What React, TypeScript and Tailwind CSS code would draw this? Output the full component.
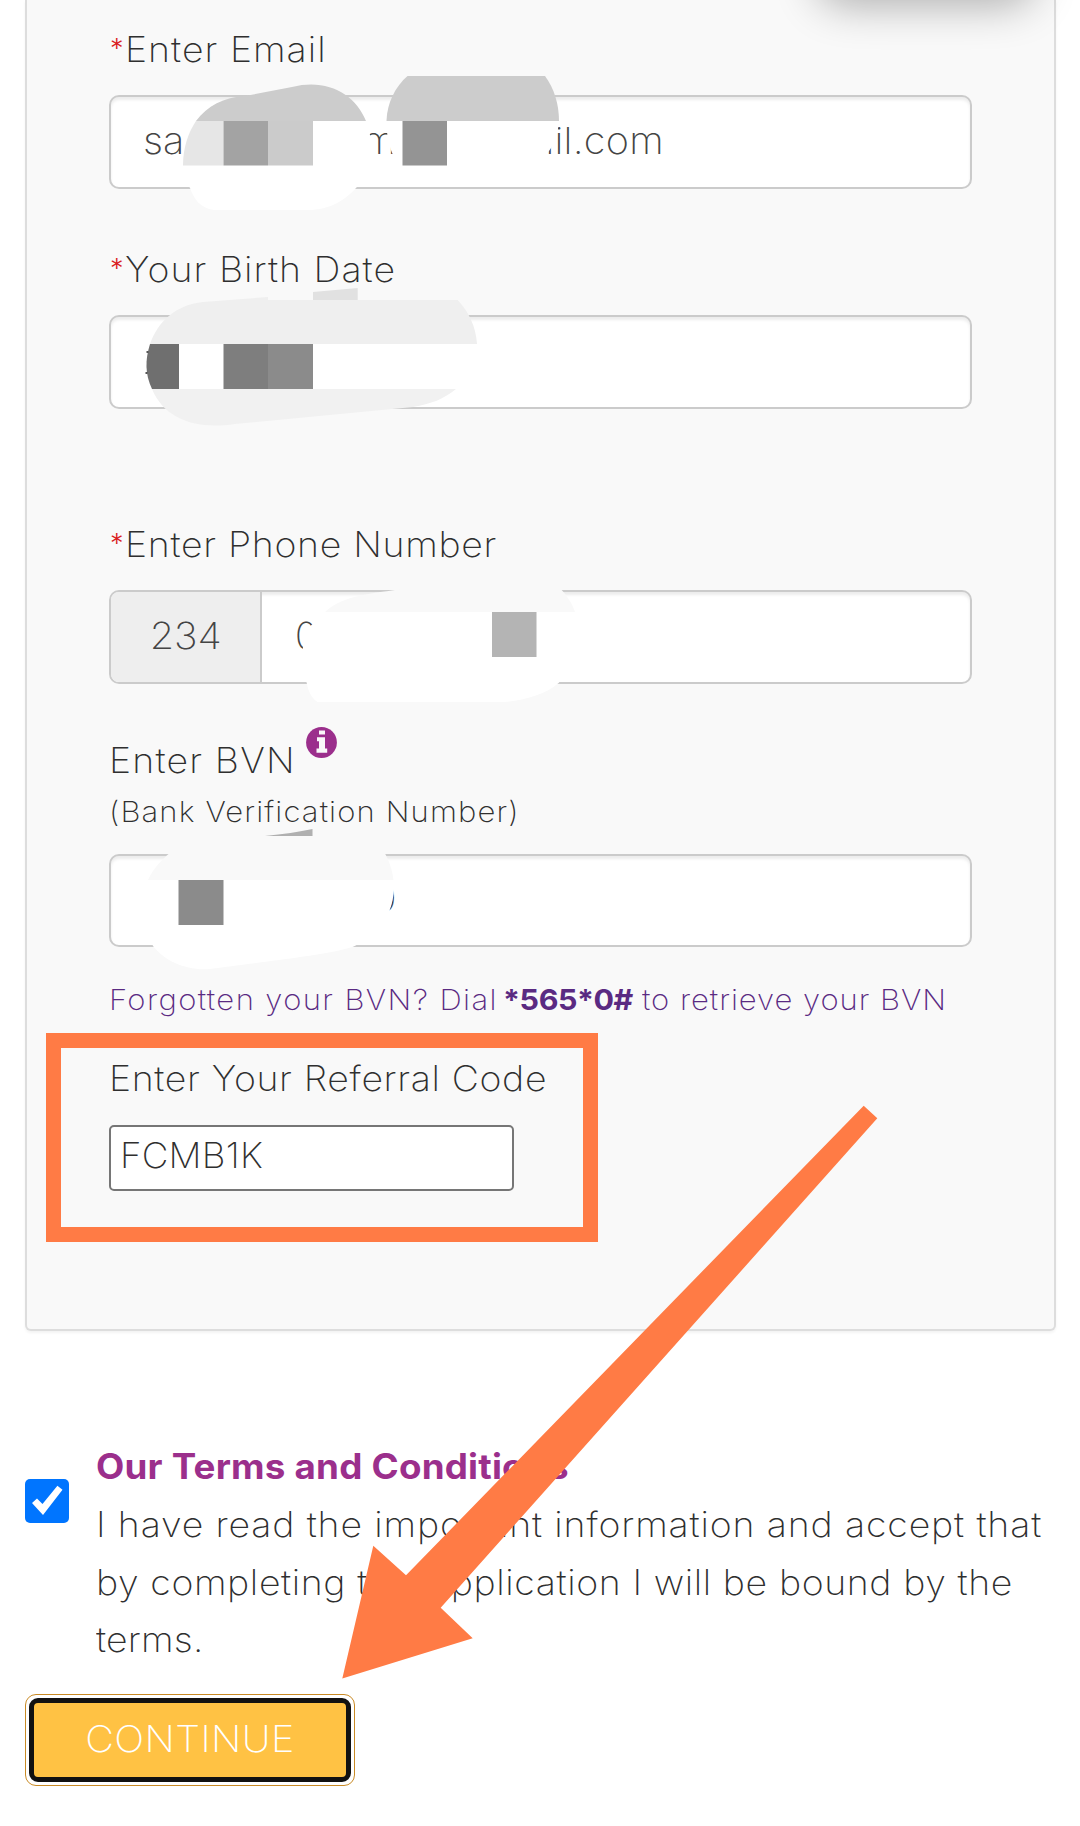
import type { ReactNode } from 'react';

const field =
  'flex w-[863px] rounded-[10px] border-2 border-[#cbcbcb] bg-white shadow-[inset_0_3px_3px_rgba(0,0,0,0.075)]';

const wide = 'inline-block origin-left scale-x-107';

function Label({ required, className, children }: { required?: boolean; className?: string; children: ReactNode }) {
  return (
    <div className="flex h-[50px] items-center text-[35px] leading-[50px] whitespace-nowrap text-[#2f2f2f]">
      {required && <span className="w-[15.5px] pl-px text-[27px] leading-[40px] font-light text-[#d9201f]">*</span>}
      <span className={`${wide} ${className ?? ''}`}>{children}</span>
    </div>
  );
}

function InfoIcon() {
  return (
    <svg className="-mt-0.5 ml-[22px]" width="31" height="31" viewBox="0 0 31 31">
      <circle cx="15.500" cy="15.500" r="15.400" fill="#9b2f8c" />
      <path fill="#f9f9f9" d="M13 3.500H19V7.500H13ZM11 10.300H19V21.500H21.200V25.700H10.500V21.500H13V14.300H11Z" />
    </svg>
  );
}

/* Brush strokes that hide the private parts of the field values. */
function Redactions() {
  return (
    <svg className="pointer-events-none absolute top-0 left-0" width="1080" height="1000" viewBox="0 0 1080 1000">
      {/* email, first stroke */}
      <path fill="#ffffff" d="M196 121H366C369 129 371 136 371 147C371 166 366 178 356 188C345 200 330 210 308 210H214C200 208 194 199 190 188C185 180 183 174 183 165C183 148 188 133 196 121Z" />
      <path fill="#cccccc" d="M196 121C207 106 224 97 245 96L292 87C327 78 355 94 366 121Z" />
      <path fill="#e6e6e6" d="M196 121H223.5V165.5H183C183 148 188 133 196 121Z" />
      <rect x="223.5" y="121" width="44.5" height="44.5" fill="#a3a3a3" />
      <rect x="268" y="121" width="45" height="44.5" fill="#cbcbcb" />
      {/* email, second stroke */}
      <path fill="#ffffff" d="M386.500 121H559C558 137 552 150 540 162L530 172H405C392 160 386 140 386.500 121Z" />
      <path fill="#cccccc" d="M386.500 121C387 103 395 87 407.500 76H545C554 88 559 104 559 121Z" />
      <rect x="402.500" y="121" width="44.500" height="44.500" fill="#949494" />
      {/* birth date */}
      <path fill="#efefef" d="M150 344C158 322 175 305 203 302L268 297V300H457.700C469 312 476 327 477 344Z" />
      <path fill="#e1e1e1" d="M313 292L357.700 288V300H313Z" />
      <path fill="#ffffff" d="M150 344H477C477 362 470 376 456 389H152C146 376 145 360 150 344Z" />
      <path fill="#6f6f6f" d="M150 344H179V389H152C145 374 145 360 150 344Z" />
      <path fill="#555555" d="M146.500 351H148.500V353H146.500ZM145.500 372H147.500V374H145.500Z" />
      <rect x="223.500" y="344" width="44.500" height="45" fill="#7e7e7e" />
      <rect x="268" y="344" width="45" height="45" fill="#8b8b8b" />
      <path fill="#f1f1f1" d="M152 389H456C444 399 431 404 413 407L235 424C194 430 164 418 152 389Z" />
      {/* phone number */}
      <path fill="#f9f9f9" d="M325 612C345 594 372 594 408 588H560C567 596 572 603 575 612Z" />
      <path fill="#ffffff" d="M325 612H575C577 640 573 667 558.600 683C545 695 524 700 505 702H317.500C311 698 308 690 307 684C303 672 302 660 303 646C305 634 308 627 313 624Z" />
      <rect x="492" y="612" width="44.500" height="45" fill="#b4b4b4" />
      {/* bank verification number */}
      <path fill="#f9f9f9" d="M148 880C153 869 161 860 171 852H384C389 860 392 869 393.500 880Z" />
      <path fill="#b0b0b0" d="M265 836C283 834 299 832 312.500 829V836Z" />
      <path fill="#ffffff" d="M148 880H393.500C395 890 393 902 389 912C378 932 367 940 352.500 947C335 952 315 955 294 958L210 969C186 971 165 961 153 946C145 926 144 901 148 880Z" />
      <rect x="178.500" y="880" width="45" height="45" fill="#8b8b8b" />
    </svg>
  );
}

function Arrow() {
  return (
    <svg className="pointer-events-none absolute top-[1100px] left-[340px]" width="540" height="582" viewBox="340 1100 540 582">
      <path
        fill="#ff7b45"
        d="M342.300 1678.500L373.300 1545.700L406 1575.300L863.700 1105.700L877.300 1118.300L440.700 1607.700L472.700 1638.300Z"
      />
    </svg>
  );
}

export default function App() {
  return (
    <div className="relative h-[1826px] w-[1080px] overflow-hidden bg-white font-['Inter',sans-serif] font-extralight text-[#2f2f2f]">
      <section className="ml-[25px] h-[1331px] w-[1031px] rounded-b-[6px] border-2 border-t-0 border-[#dddddd] bg-[#f9f9f9] px-[82px] pt-6 shadow-[0_2px_3px_rgba(0,0,0,0.05)]">
        <Label required className="tracking-[0.95px]">Enter Email</Label>
        <div className={`${field} mt-[21px] h-[94px] items-center pl-[32px] text-[37px] text-[#444]`}>
          <span className={`${wide} w-[219px] pb-0.5`}>sa</span>
          <span className={`${wide} w-[171px] pb-0.5`}>m</span>
          <span className={`${wide} pb-0.5 tracking-[0.2px]`}>ail.com</span>
        </div>

        <div className="mt-[55px]">
          <Label required className="tracking-[0.95px]">Your Birth Date</Label>
          <div className={`${field} mt-[21px] h-[94px]`} />
        </div>

        <div className="mt-[110px]">
          <Label required className="tracking-[0.65px]">Enter Phone Number</Label>
          <div className={`${field} mt-[21px] h-[94px] overflow-hidden text-[37px] text-[#444]`}>
            <span className="flex w-[151px] items-center justify-center border-r-2 border-[#cbcbcb] bg-[#eeeeee] pb-0.5">
              <span className="inline-block scale-x-107">234</span>
            </span>
            <span className="flex items-center pb-0.5 pl-[33px]">0</span>
          </div>
        </div>

        <div className="mt-[51px]">
          <div className="flex h-[50px]">
            <Label className="tracking-[1.1px]">Enter BVN</Label>
            <div className="-mt-1.5">
              <InfoIcon />
            </div>
          </div>
          <p className={`${wide} mt-[7px] block text-[29px] leading-10 tracking-[1.05px] whitespace-nowrap`}>(Bank Verification Number)</p>
          <div className={`${field} mt-[22px] h-[93px] items-center pl-[263px] text-[37px] text-[#444]`}>
            <span className="pb-1.5">0</span>
          </div>
        </div>

        <p className="mt-[33px] flex text-[29px] leading-10 whitespace-nowrap text-[#5a2a82]">
          <span className={`${wide} w-[394px] tracking-[1.3px]`}>Forgotten your BVN? Dial</span>
          <b className="w-[139px] origin-left scale-x-105 font-bold tracking-[-0.4px]">*565*0#</b>
          <span className={`${wide} tracking-[0.9px]`}>to retrieve your BVN</span>
        </p>

        <div className="mt-[33px]">
          <Label className="tracking-[0.6px]">Enter Your Referral Code</Label>
          <div className="mt-[22px] flex h-[66px] w-[405px] items-center rounded-[5px] border-2 border-[#767676] bg-white pb-1.5 pl-[9px] text-[35px]">
            <span className="inline-block origin-left scale-x-105 tracking-[0.2px]">FCMB1K</span>
          </div>
        </div>
      </section>

      <section className="ml-[25px] flex pt-[110px]">
        <span className="mt-[38px] flex size-11 shrink-0 rounded-[5px] bg-[#0075ff]">
          <svg width="44" height="44" viewBox="0 0 44 44">
            <path fill="#fff" d="M7 24L12 19.500L17.500 25L32.400 6.700L37.500 10.700L18 36Z" />
          </svg>
        </span>
        <div className="ml-[27px] text-[35px] whitespace-nowrap">
          <h2 className="origin-left scale-x-105 leading-[50px] font-bold tracking-[0.2px] text-[#9b2f8c]">Our Terms and Conditions</h2>
          <p className="mt-[5px] flex flex-col items-start leading-[57.5px]">
            <span className={`${wide} tracking-[0.8px]`}>I have read the important information and accept that</span>
            <span className={`${wide} tracking-[0.56px]`}>by completing this application I will be bound by the</span>
            <span className={`${wide} tracking-[0.2px]`}>terms.</span>
          </p>
        </div>
      </section>

      <button className="mt-[25px] ml-[25px] flex h-[92px] w-[330px] rounded-[11px] border border-[#c98a25] bg-white p-[3px]">
        <span className="flex h-full w-full items-center justify-center rounded-[9px] border-[5px] border-[#111] bg-[#ffc244] pb-0.5 text-[37px] text-white">
          <span className="inline-block scale-x-107 tracking-[0.4px]">CONTINUE</span>
        </span>
      </button>

      <div className="absolute top-[-120px] left-[818px] h-[110px] w-[216px] rounded-[26px] shadow-[0_14px_44px_rgba(0,0,0,0.32)]" />
      <Redactions />
      <div className="absolute top-[1033px] left-[46px] h-[209px] w-[552px] border-[15px] border-[#ff7b45]" />
      <Arrow />
    </div>
  );
}
